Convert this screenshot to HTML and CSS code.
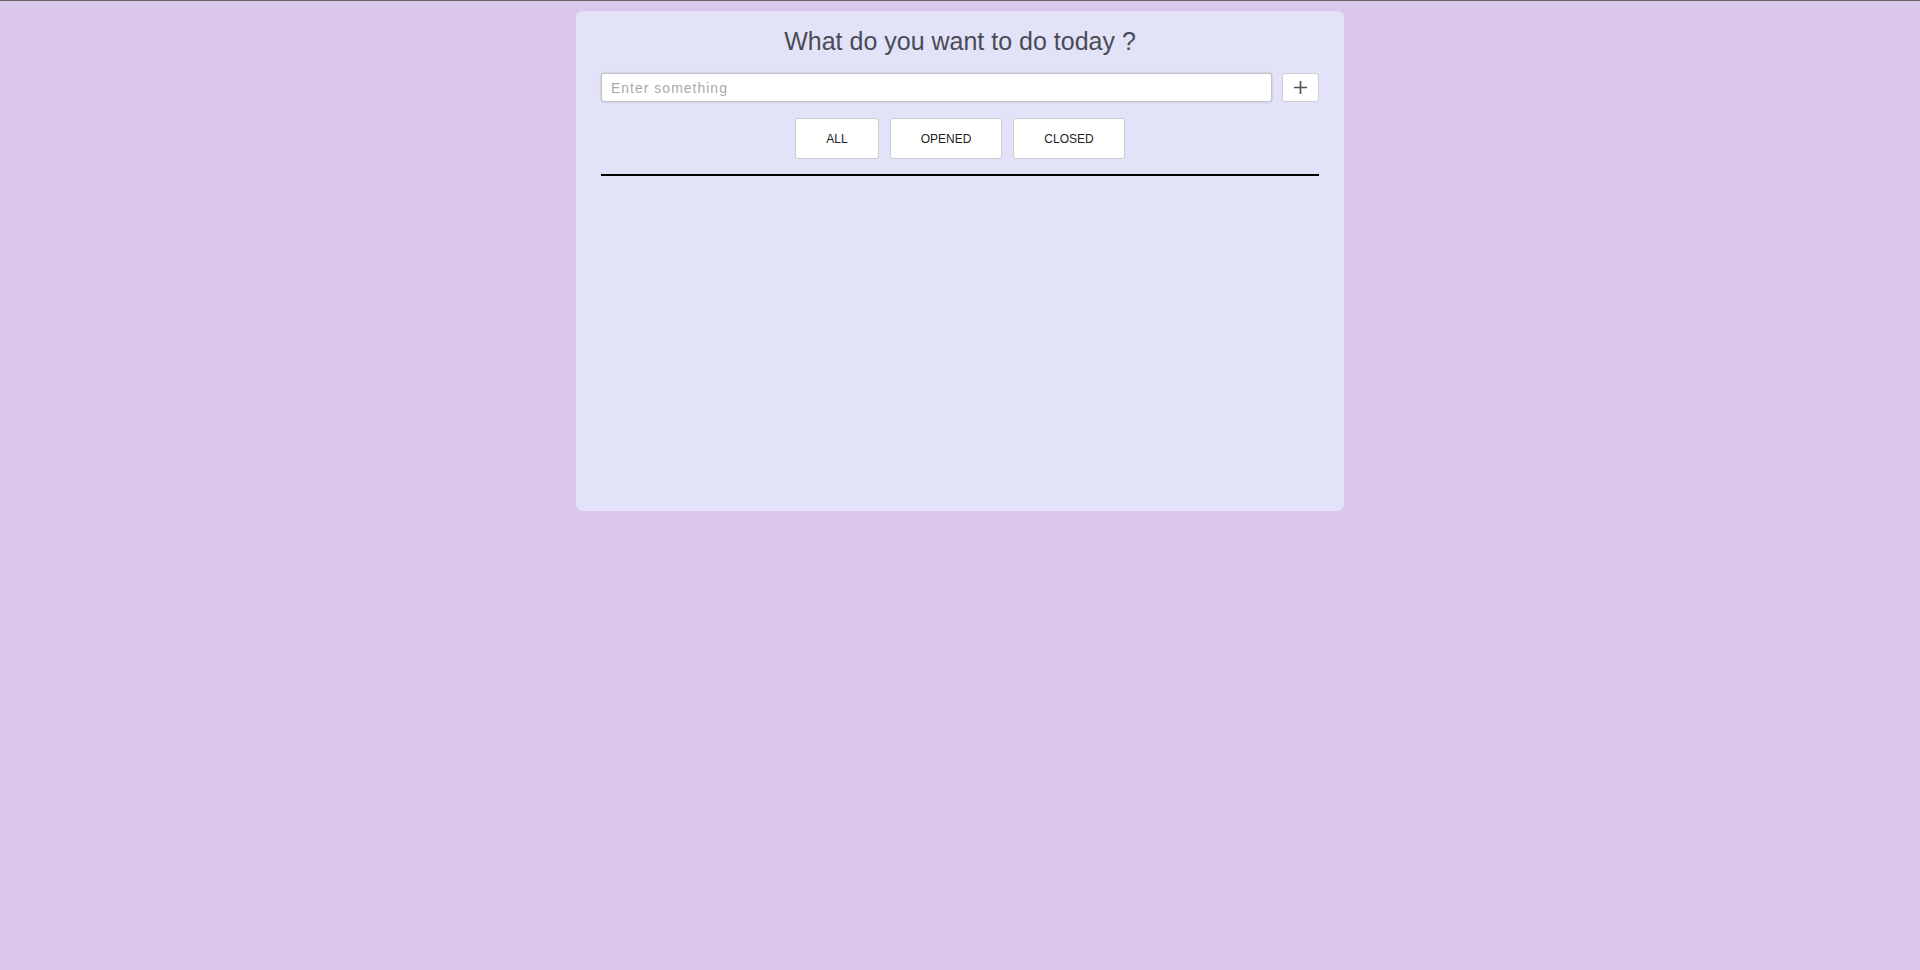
FILE: index.html
```html
<!DOCTYPE html>
<html lang="en">
<head>
<meta charset="utf-8">
<title>Todo</title>
<link rel="stylesheet" href="styles.css">
</head>
<body>
<main class="card">
  <h1 class="title">What do you want to do today ?</h1>
  <div class="add-row">
    <input class="add-input" type="text" placeholder="Enter something">
    <button class="add-btn" type="button" aria-label="Add">
      <svg class="plus" width="13" height="13" viewBox="0 0 13 13" aria-hidden="true">
        <path d="M6.5 0V13M0 6.5H13" stroke="#555" stroke-width="1.7" fill="none"/>
      </svg>
    </button>
  </div>
  <div class="filters">
    <button class="filter-btn" type="button">ALL</button>
    <button class="filter-btn" type="button">OPENED</button>
    <button class="filter-btn" type="button">CLOSED</button>
  </div>
  <hr class="divider">
  <ul class="list"></ul>
</main>
</body>
</html>
```
FILE: styles.css
```css
html, body {
  margin: 0;
  padding: 0;
}
body {
  background: #dbc6ec;
  border-top: 1px solid #666;
  min-height: 969px;
  font-family: "Liberation Sans", Arial, sans-serif;
  padding-top: 10px;
  box-sizing: border-box;
}
.card {
  width: 768px;
  height: 500px;
  margin: 0 auto;
  background: #e2e3f8;
  border-radius: 6px;
  box-sizing: border-box;
  padding: 15px 25px 0;
}
.title {
  margin: 0;
  font-size: 25px;
  line-height: 30px;
  font-weight: normal;
  color: #4b4b55;
  text-align: center;
}
.add-row {
  display: flex;
  gap: 10px;
  margin-top: 17px;
}
.add-input {
  flex: 1;
  height: 29px;
  box-sizing: border-box;
  border: 1px solid #c4c4c4;
  border-radius: 3px;
  box-shadow: 0 0 2px rgba(0,0,0,0.25);
  padding: 0 9px;
  font-family: "Liberation Sans", Arial, sans-serif;
  font-size: 14px;
  letter-spacing: 1px;
  color: #333;
  background: #fff;
  outline: none;
}
.add-input::placeholder {
  color: #a9a9a9;
}
.add-btn {
  width: 37px;
  height: 29px;
  box-sizing: border-box;
  background: #fff;
  border: 1px solid #cfcfcf;
  border-radius: 3px;
  padding: 0;
  display: flex;
  align-items: center;
  justify-content: center;
}
.plus {
  display: block;
}
.filters {
  display: flex;
  justify-content: center;
  gap: 11px;
  margin-top: 16px;
}
.filter-btn {
  height: 41px;
  box-sizing: border-box;
  padding: 0 30px;
  background: #fff;
  border: 1px solid #cccccc;
  border-radius: 3px;
  font-family: "Liberation Sans", Arial, sans-serif;
  font-size: 12px;
  color: #222;
}
.divider {
  margin: 15px 0 0;
  border: 0;
  height: 2px;
  background: #000;
}
.list {
  margin: 0;
  padding: 0;
  list-style: none;
}
```
